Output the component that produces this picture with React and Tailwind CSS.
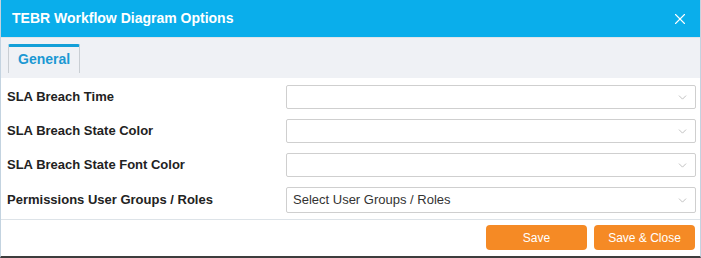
import { X, ChevronDown } from 'lucide-react';

const rows = [
    { label: 'SLA Breach Time', value: '' },
    { label: 'SLA Breach State Color', value: '' },
    { label: 'SLA Breach State Font Color', value: '' },
    { label: 'Permissions User Groups / Roles', value: 'Select User Groups / Roles', tall: true },
];

export default function App() {
    return (
        <div className="w-[701px] h-[258px] bg-white font-['Liberation_Sans',Arial,sans-serif] flex flex-col border-x border-[#c3d3e0] border-b-2 border-b-[#3d3d3d]">
            {/* Header */}
            <div className="h-[37px] bg-[#0aaeeb] flex items-center justify-between pl-[11px] pr-[11px] shrink-0">
                <h2 className="text-white font-bold text-[14px]">TEBR Workflow Diagram Options</h2>
                <X className="w-[18px] h-[18px] text-white" strokeWidth={1.5} />
            </div>

            {/* Tabs */}
            <div className="h-[41px] bg-[#eff1f5] border-t border-[#dfe5ea] pl-[7px] pt-[6px] shrink-0">
                <div className="inline-flex items-center h-[29px] px-[9px] bg-[#eff1f5] border-t-[3px] border-t-[#129fd8] border-x border-x-[#c9ced3] rounded-t-[2px]">
                    <span className="text-[#1b98d3] font-bold text-[14px] -mt-[1px]">General</span>
                </div>
            </div>

            {/* Form */}
            <div className="flex flex-col gap-[10px] pt-[7px] pb-[6px] pl-[6px] pr-[4px] border-b border-[#dde3e8]">
                {rows.map((row) => (
                    <div key={row.label} className="flex items-center">
                        <label className="w-[279px] text-[13px] font-bold text-[#222]">{row.label}</label>
                        <div className={`flex-1 flex items-center justify-between border border-[#cfcfcf] rounded-[2px] pl-[6px] pr-[6px] ${row.tall ? 'h-[26px]' : 'h-[24px]'}`}>
                            <span className="text-[13px] text-[#333]">{row.value}</span>
                            <ChevronDown className="w-[13px] h-[13px] text-[#b3b3b3]" strokeWidth={1.5} />
                        </div>
                    </div>
                ))}
            </div>

            {/* Footer */}
            <div className="flex justify-end gap-[7px] pt-[5px] pr-[5px]">
                <button className="w-[101px] h-[25px] bg-[#f58a25] text-white text-[12px] rounded-[4px]">Save</button>
                <button className="w-[101px] h-[25px] bg-[#f58a25] text-white text-[12px] rounded-[4px]">Save &amp; Close</button>
            </div>
        </div>
    );
}
